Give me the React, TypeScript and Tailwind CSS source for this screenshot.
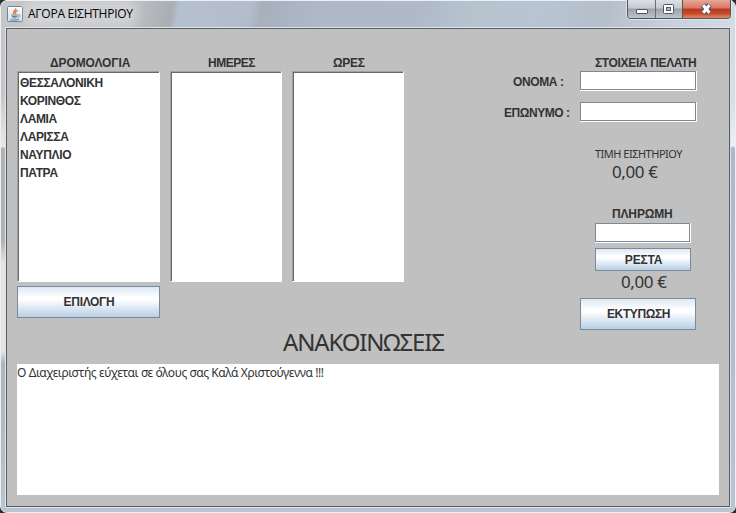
import React from 'react';

const bold = "font-['Liberation_Sans',sans-serif] text-[12px] font-bold leading-[16px] whitespace-nowrap text-[#333]";
const tahoma = "font-['Noto_Sans',sans-serif] whitespace-nowrap text-[#333]";
const metal =
  "flex items-center justify-center border border-[#7a8a99] bg-[linear-gradient(180deg,#dde8f3_0%,#fff_36%,#fff_42%,#b8cfe5_100%)]";

function JavaIcon() {
  return (
    <svg width="16" height="16" viewBox="0 0 16 16" fill="none">
      <defs>
        <linearGradient id="tile" x1="0" y1="0" x2="0" y2="1">
          <stop offset="0" stopColor="#fff" />
          <stop offset="1" stopColor="#d4dce4" />
        </linearGradient>
      </defs>
      <rect x=".5" y=".5" width="15" height="15" rx="1.2" fill="url(#tile)" stroke="#6d8497" />
      <path d="M8.6 2.4C9.6 4.4 5 4.9 7.2 7.8M10.8 4.4C8.3 5.4 8 6.3 8.8 8" stroke="#e5783a" strokeWidth="1.5" />
      <path d="M4.2 9h6.4M4.9 10.5h5.2M5.4 12h4.2M3.2 13.6c2.2.8 6.6.8 8.8-.3M10.8 8.8c2.8-.5 2.7 2-.3 2.5" stroke="#5b7f9e" strokeWidth="1" />
    </svg>
  );
}

function List({ title, width, titleClass, items = [] }: { title: string; width: string; titleClass: string; items?: string[] }) {
  return (
    <div className={width}>
      <div className={`${bold} ${titleClass}`}>{title}</div>
      <div className="h-[211px] border-t border-l border-[#a0a0a0] border-r border-b border-r-white border-b-white">
        <div className="h-full border-t border-l border-[#696969] bg-white pt-px pl-px">
          {items.map((i) => (
            <div key={i} className="h-[18px] font-['Liberation_Sans',sans-serif] text-[12px] leading-[18px] font-bold tracking-[-0.35px] text-[#333]">
              {i}
            </div>
          ))}
        </div>
      </div>
    </div>
  );
}

function Field({ size }: { size: string }) {
  return (
    <div className={`${size} shrink-0 border-r border-b border-white`}>
      <div className="h-full border border-[#7a8a99] bg-white" />
    </div>
  );
}

function WindowButtons() {
  return (
    <div className="relative h-[19px] w-[104px]">
      <div className="flex h-[19px] overflow-hidden rounded-b-[4px] border border-t-0 border-[#4e5560] shadow-[0_0_0_1px_#e2e7ec]">
        <div className="w-[28px] border-r border-[#666c78] bg-[linear-gradient(180deg,#dde0e4_0%,#c5c9ce_45%,#9ca2aa_50%,#bdc4cc_100%)]" />
        <div className="w-[27px] border-r border-[#555] bg-[linear-gradient(180deg,#dde0e4_0%,#c5c9ce_45%,#9ca2aa_50%,#bdc4cc_100%)]" />
        <div className="flex-1 bg-[linear-gradient(180deg,#e8a797_0%,#d67865_45%,#bb351d_50%,#c84a2c_75%,#df8b65_100%)]" />
      </div>
      <svg className="absolute inset-0" width="104" height="19">
        <rect x="9.5" y="9.5" width="11" height="4" rx=".5" fill="#fff" stroke="#535666" />
        <rect x="36.5" y="4.5" width="10" height="9" rx="1" fill="#fff" stroke="#535666" />
        <rect x="39.5" y="7.5" width="4" height="3" fill="#b2b7bf" stroke="#535666" />
        <path d="M76 5l6.6 8M82.6 5l-6.6 8" stroke="#535666" strokeWidth="5.4" />
        <path d="M76.2 5.2l6.2 7.6M82.4 5.2l-6.2 7.6" stroke="#fff" strokeWidth="3.1" />
      </svg>
    </div>
  );
}

export default function App() {
  return (
    <div className="h-[513px] w-[736px] overflow-hidden bg-[#302d2d]">
      <div className="flex h-[513px] flex-col rounded-[7px] border border-[#edf0f3] bg-[linear-gradient(180deg,#c6c7c8_0px,#c4c5c6_90px,#e9e9e9_146px,#b1b4b4_147px,#b1b4b4_240px,#e4e4e4_262px,#e4e4e4_350px,#afb5bb_362px,#b9c5d2_513px)]">
        <div className="flex h-[26px] shrink-0 rounded-t-[6px] bg-[linear-gradient(100deg,#c5c6c8_0%,#bec0c2_18%,#a9aeb4_23.3%,#b5c0d0_24.3%,#b3bccb_34%,#a7b0bc_35.5%,#aeb8c8_43%,#afb9c8_57%,#b7c2cf_63%,#b9c4d2_73%,#b5bfcc_82%,#cbd1dc_92%,#d5dbe4_100%)] pl-[6px]">
          <div className="mt-[5px]">
            <JavaIcon />
          </div>
          <div className="mt-[4px] ml-[5px] h-[17px] rounded-full bg-white/25 font-['Open_Sans',sans-serif] text-[12px] leading-[17px] tracking-[-0.25px] whitespace-nowrap text-black shadow-[0_0_10px_6px_rgba(255,255,255,0.25)]">
            ΑΓΟΡΑ ΕΙΣΗΤΗΡΙΟΥ
          </div>
          <div className="mt-[-1px] mr-[4px] ml-auto">
            <WindowButtons />
          </div>
        </div>

        <div className="flex h-[481px] shrink-0 bg-[linear-gradient(180deg,#d4dae3_0px,#d8dde6_70px,#eef0f3_119px,#aeb8c9_121px,#b3bdcc_300px,#bac5d4_481px)] [background-position:right] [background-size:6px_481px] bg-no-repeat pl-[4px]">
          <div className="h-[481px] w-[726px] rounded-[1px] border border-[#e0e4e9] bg-[#e0e4e9]">
            <div className="h-[479px] border border-[#5a5e66] bg-[#c0c0c0] px-[10px] pt-[26px]">
              <div className="flex h-[275px]">
                <div className="mr-[10px] w-[143px]">
                  <List
                    title="ΔΡΟΜΟΛΟΓΙΑ"
                    width="w-[143px]"
                    titleClass="pl-[33px] tracking-[-0.1px]"
                    items={['ΘΕΣΣΑΛΟΝΙΚΗ', 'ΚΟΡΙΝΘΟΣ', 'ΛΑΜΙΑ', 'ΛΑΡΙΣΣΑ', 'ΝΑΥΠΛΙΟ', 'ΠΑΤΡΑ']}
                  />
                  <div className={`${metal} mt-[4px] h-[32px] w-[143px]`}>
                    <span className={`${bold} pl-px tracking-[-0.3px]`}>ΕΠΙΛΟΓΗ</span>
                  </div>
                </div>
                <List title="ΗΜΕΡΕΣ" width="w-[112px]" titleClass="pl-[38px] tracking-[-0.5px]" />
                <div className="ml-[10px]">
                  <List title="ΩΡΕΣ" width="w-[112px]" titleClass="pl-[41px] tracking-[-0.3px]" />
                </div>

                <div className="ml-[99px] w-[194px]">
                  <div className={`${bold} pl-[92px] tracking-[-0.35px]`}>ΣΤΟΙΧΕΙΑ ΠΕΛΑΤΗ</div>
                  <div className="flex h-[31px]">
                    <div className={`${bold} w-[77px] pt-[3px] pl-[10px] tracking-[-0.4px]`}>ΟΝΟΜΑ :</div>
                    <Field size="h-[20px] w-[117px]" />
                  </div>
                  <div className="flex h-[44px]">
                    <div className={`${bold} w-[77px] pt-[3px] pl-px tracking-[-0.45px]`}>ΕΠΩΝΥΜΟ :</div>
                    <Field size="h-[20px] w-[117px]" />
                  </div>
                  <div className={`${tahoma} h-[15px] pl-[92px] text-[11px] leading-[15px] tracking-[-0.5px]`}>ΤΙΜΗ ΕΙΣΗΤΗΡΙΟΥ</div>
                  <div className={`${tahoma} h-[24px] pl-[109px] text-[17px] leading-[22px] tracking-[-0.4px]`}>0,00 €</div>
                  <div className={`${bold} mt-[21px] pl-[109px] tracking-[-0.15px]`}>ΠΛΗΡΩΜΗ</div>
                  <div className="mt-px pl-[92px]">
                    <Field size="h-[20px] w-[96px]" />
                    <div className={`${metal} mt-[5px] h-[23px] w-[96px]`}>
                      <span className={`${bold} pl-px tracking-[-0.2px]`}>ΡΕΣΤΑ</span>
                    </div>
                  </div>
                  <div className={`${tahoma} h-[27px] pl-[118px] text-[17px] leading-[22px] tracking-[-0.4px]`}>0,00 €</div>
                  <div className={`${metal} ml-[77px] h-[32px] w-[116px]`}>
                    <span className={`${bold} pl-px tracking-[-0.4px]`}>ΕΚΤΥΠΩΣΗ</span>
                  </div>
                </div>
              </div>

              <div className={`${tahoma} h-[34px] pl-[266px] text-[24px] leading-[24px] tracking-[-1.15px]`}>ΑΝΑΚΟΙΝΩΣΕΙΣ</div>
              <div className={`${tahoma} h-[131px] w-[702px] bg-white text-[12px] leading-[18px] tracking-[-0.42px]`}>
                Ο Διαχειριστής εύχεται σε όλους σας Καλά Χριστούγεννα !!!
              </div>
            </div>
          </div>
        </div>
      </div>
    </div>
  );
}
